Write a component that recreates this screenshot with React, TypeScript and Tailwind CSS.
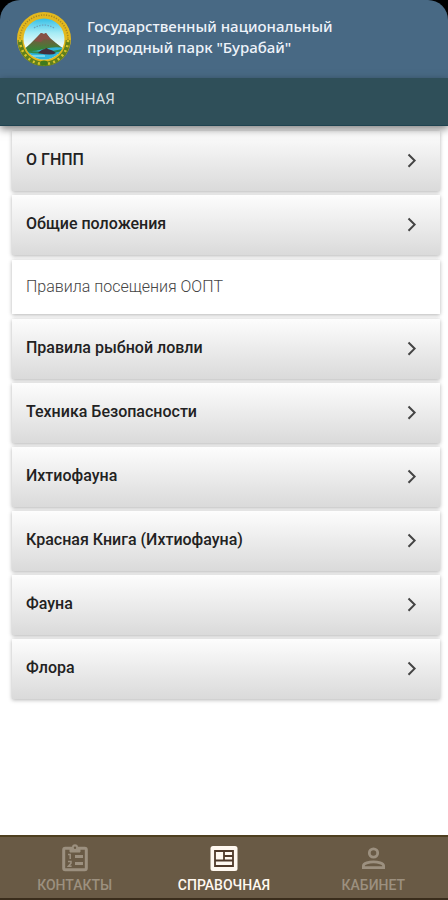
import { ReactNode } from "react";

type Item = {
  title: string;
  plain?: boolean;
};

const ITEMS: Item[] = [
  { title: "О ГНПП" },
  { title: "Общие положения" },
  { title: "Правила посещения ООПТ", plain: true },
  { title: "Правила рыбной ловли" },
  { title: "Техника Безопасности" },
  { title: "Ихтиофауна" },
  { title: "Красная Книга (Ихтиофауна)" },
  { title: "Фауна" },
  { title: "Флора" },
];

export default function App() {
  return (
    <div className="flex min-h-screen flex-col bg-white font-['Roboto',sans-serif]">
      {/* Header */}
      <div className="bg-black">
        <header className="flex h-[78px] items-center gap-[15px] rounded-t-[20px] bg-[#486984] px-4">
          <Emblem />
          <h1 className="pb-1 font-['Noto_Sans',sans-serif] text-[15px] leading-[21px] font-medium text-[#eef3fa]">
            Государственный национальный
            <br />
            природный парк "Бурабай"
          </h1>
        </header>
      </div>

      <div className="relative z-10 flex h-12 items-center border-b border-[#1f4350] bg-[#2f4f59] px-4 pb-1 shadow-[0_3px_8px_rgba(0,0,0,0.5)]">
        <h2 className="text-[15px] text-[#d5dfe2]">СПРАВОЧНАЯ</h2>
      </div>

      {/* List */}
      <main className="flex-1 pt-[5px] pr-2 pl-3">
        <ul className="flex flex-col gap-1">
          {ITEMS.map((item) => (
            <li key={item.title}>
              <ListRow {...item} />
            </li>
          ))}
        </ul>
      </main>

      {/* Bottom tabs */}
      <nav className="grid h-[65px] grid-cols-3 border-t-2 border-b-2 border-t-[#4e3f1f] border-b-[#3a2d1c] bg-[#695a45]">
        <Tab label="КОНТАКТЫ">
          <ClipboardIcon />
        </Tab>
        <Tab label="СПРАВОЧНАЯ" active>
          <NewsIcon />
        </Tab>
        <Tab label="КАБИНЕТ">
          <PersonIcon />
        </Tab>
      </nav>
    </div>
  );
}

function ListRow({ title, plain }: Item) {
  if (plain) {
    return (
      <button
        type="button"
        className="my-px flex h-[54px] w-full items-center bg-white px-3.5 text-left text-[16px] font-light text-[#444] shadow-[0_1px_4px_rgba(0,0,0,0.3)]"
      >
        {title}
      </button>
    );
  }

  return (
    <button
      type="button"
      className="flex h-[60px] w-full items-center justify-between bg-linear-to-b from-[#fdfdfd] to-[#dadada] pr-5 pl-3.5 text-left text-[16px] font-medium text-[#222] shadow-[0_1px_4px_rgba(0,0,0,0.3)]"
    >
      <span className="pb-0.5">{title}</span>
      <svg viewBox="0 0 16 16" className="size-4" fill="none" stroke="#444" strokeWidth="2">
        <path d="M4.5 1.5 10.6 7.6 4.5 13.7" />
      </svg>
    </button>
  );
}

function Tab({ label, active, children }: { label: string; active?: boolean; children: ReactNode }) {
  return (
    <button
      type="button"
      className={`flex flex-col items-center pt-1.5 text-[14px] leading-5 font-medium ${
        active ? "text-[#fff8f0]" : "text-[#9c907f]"
      }`}
    >
      {children}
      <span className="pt-0.5">{label}</span>
    </button>
  );
}

function ClipboardIcon() {
  return (
    <svg viewBox="0 0 30 30" className="size-[30px]" fill="none" stroke="currentColor">
      <rect x="3.7" y="5.2" width="22.6" height="21.6" rx="1.5" strokeWidth="3" />
      <path d="M10 5h10v4H10z" fill="currentColor" strokeWidth="1" />
      <circle cx="15" cy="4.2" r="3" fill="currentColor" stroke="none" />
      <circle cx="15" cy="4.8" r="1.2" fill="#695a45" stroke="none" />
      <path d="M15 13.5h8M15 20.5h8" strokeWidth="3" />
      <path d="M8 11.5h2.2v4.5M8 18.5h3v1.8l-2.6 2.9h3.2" strokeWidth="1.5" />
    </svg>
  );
}

function NewsIcon() {
  return (
    <svg viewBox="0 0 30 30" className="size-[30px]" fill="none">
      <rect x="1.5" y="3" width="27" height="25" rx="2.5" fill="currentColor" />
      <path d="M6 8h18v15H6zM15 8v9.5M6 17.5h9M15 13h9M15 17.5h9" stroke="#4f3929" strokeWidth="1.8" />
    </svg>
  );
}

function PersonIcon() {
  return (
    <svg viewBox="0 0 30 30" className="size-[30px]" fill="none" stroke="currentColor" strokeWidth="2.8">
      <circle cx="15.5" cy="10" r="4.2" />
      <path d="M5.4 24.6v-1.8c0-2.6 5.7-4 10.1-4s10.1 1.4 10.1 4v1.8z" />
    </svg>
  );
}

function Emblem() {
  return (
    <svg viewBox="0 0 56 56" className="size-14 shrink-0">
      <defs>
        <linearGradient id="sky" x1="0" y1="0" x2="0" y2="1">
          <stop offset="0" stopColor="#35bfe6" />
          <stop offset="0.35" stopColor="#a5ebf5" />
          <stop offset="0.65" stopColor="#e9fbfb" />
        </linearGradient>
        <linearGradient id="hill" x1="0" y1="0" x2="0" y2="1">
          <stop offset="0.1" stopColor="#7c5146" />
          <stop offset="0.5" stopColor="#5d6b3a" />
          <stop offset="0.85" stopColor="#2f8a36" />
        </linearGradient>
        <clipPath id="disc">
          <circle cx="28" cy="28" r="20.5" />
        </clipPath>
      </defs>
      <circle cx="28" cy="28" r="27" fill="#e3b81e" />
      <circle cx="28" cy="28" r="24" fill="none" stroke="#a98a22" strokeWidth="1.6" strokeDasharray="1.2 1.4" />
      {/* wreath along the lower half */}
      <path d="M4 29a24 24 0 0 0 48 0" fill="none" stroke="#61801c" strokeWidth="4.6" />
      <path d="M4 29a24 24 0 0 0 48 0" fill="none" stroke="#d9c52a" strokeWidth="2.6" strokeDasharray="2 3.2" />
      <circle cx="28" cy="28" r="20.5" fill="url(#sky)" />
      <g clipPath="url(#disc)">
        <path d="M18 17q10-6 20 0" fill="none" stroke="#69a5c0" strokeWidth="1.4" strokeDasharray="1.5 1.3" />
        <path d="M6 40 14 33l9-9 2-2 3 1 2-1 4 5 6 5 9 7v4H6z" fill="url(#hill)" />
        <path d="m18 30 7-8 3 1 2-1 5 7-7-1-3 3z" fill="#875145" />
        <path d="M0 39q14 3 28-1t28 1v20H0z" fill="#2fb5dd" />
        <path d="M9 40q18 4 38-1" fill="none" stroke="#2c8b4f" strokeWidth="2" />
        <path d="M22 42q4-4 7-4 1-2 3 0 5 1 8 4-4 3-18 0z" fill="#432d3a" />
        <path d="M14 45h15" stroke="#bdf3f5" />
      </g>
      <ellipse cx="28" cy="52" rx="3.5" ry="2.4" fill="#3f7a1c" />
    </svg>
  );
}
